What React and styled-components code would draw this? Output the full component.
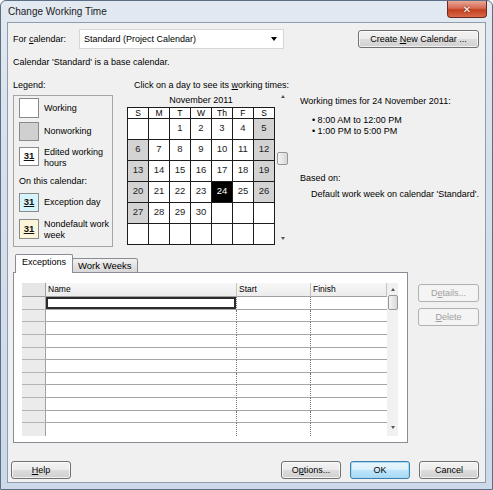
import React from 'react';
import styled, { createGlobalStyle, css } from 'styled-components';

const GlobalStyle = createGlobalStyle`
  html, body {
    margin: 0;
    padding: 0;
    background: #ffffff;
  }
  body {
    font-family: "Liberation Sans", Arial, sans-serif;
    font-size: 9px;
    color: #000;
  }
  * {
    box-sizing: border-box;
  }
`;

const Window = styled.div`
  width: 493px;
  height: 490px;
  display: flex;
  flex-direction: column;
  background: linear-gradient(180deg, #e2e9f1 0%, #d7e1ec 30%, #cbd9e8 100%);
  border: 1px solid #5d6f86;
  border-radius: 6px 6px 0 0;
`;

const TitleBar = styled.div`
  height: 21px;
  display: flex;
  align-items: flex-start;
  padding-left: 7px;
`;

const Title = styled.span`
  font-size: 10px;
  line-height: 21px;
  color: #1b1b1b;
  flex: 1;
`;

const CloseButton = styled.div`
  width: 40px;
  height: 17px;
  margin-right: 5px;
  border: 1px solid #6b2a20;
  border-top: none;
  border-radius: 0 0 4px 4px;
  background: linear-gradient(180deg, #e9a797 0%, #d66a52 45%, #c2401f 55%, #d9684a 100%);
  display: flex;
  align-items: center;
  justify-content: center;
  color: #fff;
  font-family: "DejaVu Sans", sans-serif;
  font-weight: bold;
  font-size: 10px;
  text-shadow: 0 0 2px #5a1a10;
`;

const Body = styled.div`
  flex: 1;
  margin: 0 6px 6px 6px;
  background: #f0f0f0;
  border: 1px solid #8e9cae;
  padding: 6px 6px 0 5px;
  display: flex;
  flex-direction: column;
`;

const Row = styled.div`
  display: flex;
  align-items: ${(p) => p.$align || 'center'};
  margin-top: ${(p) => p.$mt || 0}px;
`;

const Label = styled.span`
  width: ${(p) => (p.$w ? `${p.$w}px` : 'auto')};
  line-height: 11px;
  white-space: nowrap;
`;

const Combo = styled.div`
  width: 205px;
  height: 20px;
  background: #fff;
  border: 1px solid #d6d6d6;
  display: flex;
  align-items: center;
  padding: 0 6px 0 4px;
  span {
    flex: 1;
  }
`;

const DownCaret = styled.i`
  width: 0;
  height: 0;
  border-left: 3px solid transparent;
  border-right: 3px solid transparent;
  border-top: 4px solid #000;
`;

const Spacer = styled.div`
  flex: 1;
`;

const Button = styled.div`
  width: ${(p) => p.$w || 60}px;
  height: 18px;
  border-radius: 3px;
  display: flex;
  align-items: center;
  justify-content: center;
  white-space: nowrap;
  color: #000;
  border: 1px solid #707070;
  background: linear-gradient(180deg, #f3f3f3 0%, #ebebeb 49%, #dddddd 50%, #cfcfcf 100%);
  box-shadow: inset 0 0 0 1px rgba(255, 255, 255, 0.7);
  ${(p) =>
    p.$primary &&
    css`
      border-color: #3c7fb1;
      box-shadow: inset 0 0 0 1px #a7d8f3;
      background: linear-gradient(180deg, #eaf6fd 0%, #d9f0fc 49%, #bee6fd 50%, #a7d9f5 100%);
    `}
  ${(p) =>
    p.$disabled &&
    css`
      border-color: #adb2b5;
      color: #a0a0a0;
      background: #f4f4f4;
      box-shadow: none;
    `}
`;

const Main = styled.div`
  display: flex;
  margin-top: 12px;
  height: 167px;
`;

const LegendCol = styled.div`
  width: 104px;
  display: flex;
  flex-direction: column;
`;

const LegendBox = styled.div`
  margin-top: 4px;
  height: 152px;
  border: 1px solid #a5a5a5;
  padding: 2px 0 0 5px;
  display: flex;
  flex-direction: column;
`;

const LegendItem = styled.div`
  display: flex;
  align-items: ${(p) => (p.$top ? 'flex-start' : 'center')};
  gap: 5px;
  margin-top: ${(p) => p.$mt || 0}px;
  line-height: 10.5px;
`;

const Swatch = styled.div`
  width: 20px;
  height: ${(p) => p.$h || 20}px;
  flex-shrink: 0;
  border: 1px solid #8a8a8a;
  background: ${(p) => p.$bg || '#fff'};
  display: flex;
  align-items: center;
  justify-content: center;
  font-weight: bold;
  font-size: 9.5px;
  text-decoration: underline;
  color: #111;
`;

const SubHead = styled.div`
  margin-top: 8px;
  line-height: 11px;
`;

const CalCol = styled.div`
  width: 162px;
  margin-left: 14px;
  display: flex;
  flex-direction: column;
`;

const Prompt = styled.div`
  margin-left: 7px;
  line-height: 11px;
  white-space: nowrap;
`;

const CalArea = styled.div`
  display: flex;
`;

const Month = styled.div`
  width: 148px;
  display: flex;
  flex-direction: column;
`;

const MonthTitle = styled.div`
  margin-top: 4px;
  height: 12px;
  line-height: 11px;
  text-align: center;
`;

const CalGrid = styled.div`
  display: grid;
  grid-template-columns: repeat(7, 20px);
  grid-template-rows: 10px repeat(6, 20px);
  gap: 1px;
  background: #1c1c1c;
  border: 1px solid #1c1c1c;
`;

const DayHead = styled.div`
  background: #fff;
  text-align: center;
  line-height: 10px;
  font-size: 8.5px;
`;

const Day = styled.div`
  background: ${(p) => (p.$sel ? '#000' : p.$off ? '#d3d3d3' : '#fff')};
  color: ${(p) => (p.$sel ? '#fff' : '#222')};
  text-align: center;
  padding-top: 4px;
  font-size: 9.5px;
  line-height: 10px;
`;

const VScroll = styled.div`
  width: ${(p) => p.$w || 12}px;
  margin-left: ${(p) => p.$ml || 0}px;
  background: ${(p) => p.$bg || 'transparent'};
  display: flex;
  flex-direction: column;
  align-items: center;
  padding: ${(p) => p.$pad || '4px 0 5px'};
`;

const Arrow = styled.i`
  width: 0;
  height: 0;
  border-left: 2px solid transparent;
  border-right: 2px solid transparent;
  ${(p) => (p.$up ? 'border-bottom: 3px solid #555;' : 'border-top: 3px solid #555;')}
`;

const Thumb = styled.div`
  width: ${(p) => p.$w || 11}px;
  height: ${(p) => p.$h || 13}px;
  margin-top: ${(p) => p.$mt || 0}px;
  border: 1px solid #979797;
  border-radius: 2px;
  background: linear-gradient(90deg, #f5f5f5 0%, #e6e6e6 50%, #d8d8d8 100%);
`;

const InfoCol = styled.div`
  margin-left: 11px;
  display: flex;
  flex-direction: column;
  line-height: 11px;
  white-space: nowrap;
`;

const InfoLine = styled.div`
  margin-top: ${(p) => p.$mt || 0}px;
  padding-left: ${(p) => p.$pl || 0}px;
`;

const Lower = styled.div`
  display: flex;
  margin-top: 8px;
`;

const TabCol = styled.div`
  width: 395px;
  display: flex;
  flex-direction: column;
`;

const TabRow = styled.div`
  display: flex;
  align-items: flex-end;
  height: 18px;
  padding-left: 2px;
  margin-bottom: -1px;
  position: relative;
  z-index: 1;
`;

const Tab = styled.div`
  height: ${(p) => (p.$active ? 19 : 15)}px;
  padding: 0 ${(p) => (p.$active ? 6 : 5)}px;
  border: 1px solid #898c95;
  border-bottom: ${(p) => (p.$active ? 'none' : '1px solid #898c95')};
  margin-left: ${(p) => (p.$active ? 0 : -1)}px;
  border-radius: 2px 2px 0 0;
  background: ${(p) => (p.$active ? '#fff' : 'linear-gradient(180deg, #f2f2f2 0%, #e3e3e3 50%, #d8d8d8 100%)')};
  line-height: ${(p) => (p.$active ? 15 : 13)}px;
  font-size: ${(p) => (p.$active ? 9 : 9.5)}px;
  white-space: nowrap;
`;

const Panel = styled.div`
  height: 171px;
  background: #fff;
  border: 1px solid #898c95;
  padding: 10px 0 0 8px;
`;

const Table = styled.div`
  display: flex;
  width: 376px;
  height: 153px;
`;

const TableGrid = styled.div`
  display: grid;
  grid-template-columns: 24px 191px 74px 76px;
  grid-template-rows: 14px repeat(11, 1fr);
  width: 365px;
`;

const HeadCell = styled.div`
  background: linear-gradient(180deg, #f7f7f7 0%, #ececec 100%);
  border-bottom: 1px solid #a0a0a0;
  border-right: 1px solid #c4c4c4;
  padding-left: 2px;
  line-height: 13px;
  font-size: 8.5px;
  ${(p) => p.$corner && 'background: #e6e6e6; border-right-color: #a0a0a0;'}
`;

const RowHead = styled.div`
  background: #ebebeb;
  border-bottom: ${(p) => (p.$last ? 'none' : '1px solid #b4b4b4')};
  border-right: 1px solid #a0a0a0;
`;

const Cell = styled.div`
  background: #fff;
  border-bottom: ${(p) => (p.$last ? 'none' : '1px solid #a6a6a6')};
  border-right: ${(p) => (p.$edge ? 'none' : '1px dotted #777')};
  ${(p) => p.$sel && 'box-shadow: inset 0 0 0 2px #2b2b2b;'}
`;

const SideCol = styled.div`
  margin-left: 10px;
  padding-top: 29px;
  display: flex;
  flex-direction: column;
  gap: 6px;
`;

const Footer = styled.div`
  display: flex;
  margin-top: 18px;
  margin-left: -2px;
  gap: 9px;
`;

const U = styled.span`
  text-decoration: underline;
`;

const weeks = [
  [null, null, 1, 2, 3, 4, 5],
  [6, 7, 8, 9, 10, 11, 12],
  [13, 14, 15, 16, 17, 18, 19],
  [20, 21, 22, 23, 24, 25, 26],
  [27, 28, 29, 30, null, null, null],
  [null, null, null, null, null, null, null],
];

function Calendar() {
  return (
    <CalGrid>
      {['S', 'M', 'T', 'W', 'Th', 'F', 'S'].map((d, i) => (
        <DayHead key={i}>{d}</DayHead>
      ))}
      {weeks.map((w, r) =>
        w.map((d, c) => (
          <Day key={`${r}-${c}`} $off={d !== null && (c === 0 || c === 6)} $sel={d === 24}>
            {d}
          </Day>
        ))
      )}
    </CalGrid>
  );
}

function ExceptionTable() {
  const rows = Array.from({ length: 11 }, (_, i) => i);
  return (
    <Table>
      <TableGrid>
        <HeadCell $corner />
        <HeadCell>Name</HeadCell>
        <HeadCell>Start</HeadCell>
        <HeadCell>Finish</HeadCell>
        {rows.map((i) => (
          <React.Fragment key={i}>
            <RowHead $last={i === 10} />
            <Cell $last={i === 10} $sel={i === 0} />
            <Cell $last={i === 10} />
            <Cell $last={i === 10} $edge />
          </React.Fragment>
        ))}
      </TableGrid>
      <VScroll $w={11} $bg="#f1f1f1" $pad="5px 0 7px">
        <Arrow $up />
        <Thumb $w={10} $h={15} $mt={4} />
        <Spacer />
        <Arrow />
      </VScroll>
    </Table>
  );
}

export default function App() {
  return (
    <>
      <GlobalStyle />
      <Window>
        <TitleBar>
          <Title>Change Working Time</Title>
          <CloseButton>✕</CloseButton>
        </TitleBar>
        <Body>
          <Row>
            <Label $w={66}>
              For <U>c</U>alendar:
            </Label>
            <Combo>
              <span>Standard (Project Calendar)</span>
              <DownCaret />
            </Combo>
            <Spacer />
            <Button $w={121}>
              <span>
                Create <U>N</U>ew Calendar ...
              </span>
            </Button>
          </Row>
          <Row $mt={8}>
            <Label>Calendar 'Standard' is a base calendar.</Label>
          </Row>
          <Main>
            <LegendCol>
              <Label>Legend:</Label>
              <LegendBox>
                <LegendItem>
                  <Swatch $h={20} />
                  <span>Working</span>
                </LegendItem>
                <LegendItem $mt={4}>
                  <Swatch $h={19} $bg="#d0d0d0" />
                  <span>Nonworking</span>
                </LegendItem>
                <LegendItem $mt={6} $top>
                  <Swatch $h={19}>31</Swatch>
                  <span>
                    Edited working
                    <br />
                    hours
                  </span>
                </LegendItem>
                <SubHead>On this calendar:</SubHead>
                <LegendItem $mt={6}>
                  <Swatch $h={19} $bg="#d6f4fb">31</Swatch>
                  <span>Exception day</span>
                </LegendItem>
                <LegendItem $mt={7} $top>
                  <Swatch $h={20} $bg="#fbf6da">31</Swatch>
                  <span>
                    Nondefault work
                    <br />
                    week
                  </span>
                </LegendItem>
              </LegendBox>
            </LegendCol>
            <CalCol>
              <Prompt>
                Click on a day to see its <U>w</U>orking times:
              </Prompt>
              <CalArea>
                <Month>
                  <MonthTitle>November 2011</MonthTitle>
                  <Calendar />
                </Month>
                <VScroll $ml={2}>
                  <Arrow $up />
                  <Thumb $mt={54} />
                  <Spacer />
                  <Arrow />
                </VScroll>
              </CalArea>
            </CalCol>
            <InfoCol>
              <InfoLine $mt={16}>Working times for 24 November 2011:</InfoLine>
              <InfoLine $mt={8} $pl={12}>
                • 8:00 AM to 12:00 PM
              </InfoLine>
              <InfoLine $pl={12}>• 1:00 PM to 5:00 PM</InfoLine>
              <InfoLine $mt={36}>Based on:</InfoLine>
              <InfoLine $mt={5} $pl={11}>
                Default work week on calendar 'Standard'.
              </InfoLine>
            </InfoCol>
          </Main>
          <Lower>
            <TabCol>
              <TabRow>
                <Tab $active>Exceptions</Tab>
                <Tab>Work Weeks</Tab>
              </TabRow>
              <Panel>
                <ExceptionTable />
              </Panel>
            </TabCol>
            <SideCol>
              <Button $w={61} $disabled>
                <span>
                  D<U>e</U>tails...
                </span>
              </Button>
              <Button $w={61} $disabled>
                <span>
                  <U>D</U>elete
                </span>
              </Button>
            </SideCol>
          </Lower>
          <Footer>
            <Button>
              <span>
                <U>H</U>elp
              </span>
            </Button>
            <Spacer />
            <Button>
              <span>
                O<U>p</U>tions...
              </span>
            </Button>
            <Button $primary>OK</Button>
            <Button>Cancel</Button>
          </Footer>
        </Body>
      </Window>
    </>
  );
}
